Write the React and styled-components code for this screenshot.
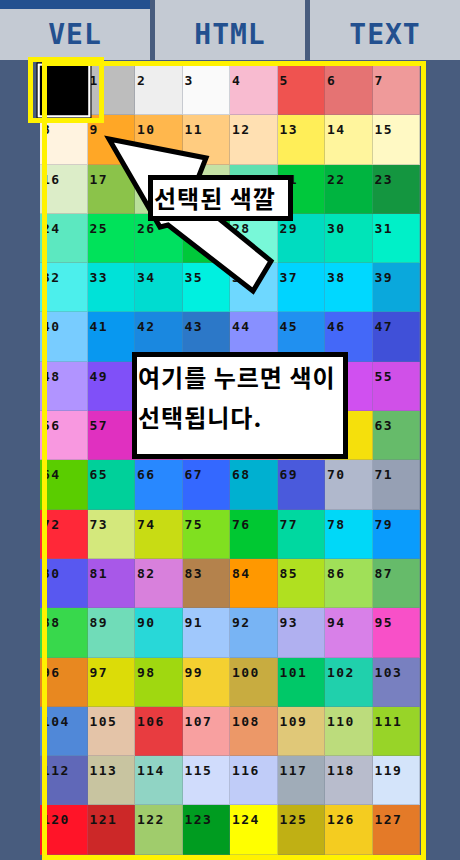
import React from 'react';
import styled, { createGlobalStyle } from 'styled-components';

const GlobalStyle = createGlobalStyle`
  html, body {
    margin: 0;
    padding: 0;
    background: #485c7e;
    overflow: hidden;
  }
  * { box-sizing: border-box; }
`;

const COLORS = [
  '#000000', '#bdbdbd', '#eeeeee', '#fafafa', '#f8bbd0', '#ef5350', '#e57373', '#ef9a9a',
  '#fff3e0', '#ffa726', '#ffb74d', '#ffcc80', '#ffe0b2', '#ffee58', '#fff59d', '#fff9c4',
  '#dcedc8', '#8bc34a', '#b9df9a', '#c5e1a5', '#5fe0b0', '#00c83c', '#00b440', '#149640',
  '#5ce8c0', '#00e25a', '#00e060', '#00c83a', '#78f8d8', '#00dcc0', '#00e4b8', '#00f0c8',
  '#4cefec', '#00e2d8', '#00dcd0', '#00f0e0', '#6ed8ff', '#00d4ff', '#00d8ff', '#0aa8dc',
  '#78ccff', '#0898f0', '#1a88e0', '#2c78c8', '#8890ff', '#2090f0', '#4468f8', '#4050d8',
  '#b194ff', '#8050f8', '#9c5cf0', '#a060e8', '#b058f0', '#c050f0', '#d050f0', '#d050e8',
  '#f898e0', '#e030c0', '#e040b0', '#f060a0', '#ff8080', '#ffb040', '#f5e00c', '#66bb6a',
  '#5acd00', '#00d09a', '#2888ff', '#3468ff', '#00b0d0', '#4a5adc', '#b0b8cc', '#96a0b4',
  '#ff2838', '#d4e87c', '#c8dc14', '#80e020', '#00c832', '#00d8a0', '#00d8f8', '#0a9cfc',
  '#5858f0', '#a858e8', '#d880dc', '#b4824c', '#ff9800', '#b0e020', '#a0e058', '#66bb6a',
  '#38d84c', '#70dcb8', '#28d8d8', '#a0c8fc', '#78b4f4', '#b0b0f0', '#d880e8', '#f850c8',
  '#e88820', '#dcdc08', '#a0d810', '#f4d030', '#c8ac40', '#00c868', '#20d0ac', '#7880c0',
  '#5088d8', '#e4c4a8', '#e83c40', '#f8a0a0', '#ec9868', '#e0c878', '#bcdc7c', '#98d428',
  '#6068b8', '#c8c4a0', '#90d4c4', '#d0dcfc', '#c0ccf8', '#a0acb8', '#b8bccc', '#d4e4fa',
  '#ff1428', '#cc2828', '#a0cc6c', '#009c20', '#ffff00', '#c0b014', '#f4cc20', '#e47a28',
];

const Page = styled.div`
  width: 460px;
  height: 860px;
  overflow: hidden;
  background: #485c7e;
`;

const TabBar = styled.div`
  display: flex;
  gap: 5px;
  height: 60px;
`;

const Tab = styled.div`
  flex: 1;
  display: flex;
  align-items: flex-end;
  justify-content: center;
  padding-bottom: 11px;
  background: #c4cad3;
  box-shadow: ${(p) => (p.$active ? 'inset 0 9px 0 #23508f' : 'none')};
  color: #23508f;
  font-family: 'DejaVu Sans Mono', monospace;
  font-weight: 700;
  font-size: 28px;
  line-height: 28px;
  letter-spacing: 1px;
`;

const Body = styled.div`
  padding: 6px 0 0 40px;
`;

const Board = styled.div`
  position: relative;
  width: 380px;
`;

const Grid = styled.div`
  display: grid;
  grid-template-columns: repeat(8, 1fr);
  grid-auto-rows: 49.3px;
`;

const Cell = styled.div`
  position: relative;
  z-index: ${(p) => (p.$selected ? 2 : 0)};
  background: ${(p) => p.$color};
  border-right: 1px solid rgba(110, 120, 140, 0.3);
  border-bottom: 1px solid rgba(110, 120, 140, 0.3);
  padding: 7px 0 0 2px;
  color: #111;
  font-family: 'DejaVu Sans Mono', monospace;
  font-weight: 700;
  font-size: 13px;
  letter-spacing: 1.4px;
  ${(p) =>
    p.$selected &&
    `
    border: 2px solid #fff;
    box-shadow: 0 0 0 1px #000;
    transform: scale(1.1);
    color: #000;
  `}
`;

const Frame = styled.div`
  position: absolute;
  z-index: 3;
  left: ${(p) => p.$left}px;
  top: ${(p) => p.$top}px;
  width: ${(p) => p.$w}px;
  height: ${(p) => p.$h}px;
  border: 5px solid #fff200;
  pointer-events: none;
`;

const Arrow = styled.svg`
  position: absolute;
  z-index: 4;
  left: 60px;
  top: 64px;
  overflow: visible;
`;

const Callout = styled.div`
  position: absolute;
  z-index: 5;
  left: ${(p) => p.$left}px;
  top: ${(p) => p.$top}px;
  width: ${(p) => p.$w}px;
  height: ${(p) => p.$h}px;
  background: #fff;
  border: 5px solid #000;
  padding: 0 0 0 1px;
  color: #000;
  font-family: 'Noto Sans CJK KR', 'Noto Sans', sans-serif;
  font-weight: 700;
  font-size: 24px;
  letter-spacing: 1px;
  line-height: ${(p) => p.$lh}px;
  white-space: nowrap;
`;

export default function App() {
  return (
    <Page>
      <GlobalStyle />
      <TabBar>
        <Tab $active>VEL</Tab>
        <Tab>HTML</Tab>
        <Tab>TEXT</Tab>
      </TabBar>
      <Body>
        <Board>
          <Grid>
            {COLORS.map((c, i) => (
              <Cell key={i} $color={c} $selected={i === 0}>
                {i}
              </Cell>
            ))}
          </Grid>
          <Frame $left={2} $top={-5} $w={384} $h={799} />
          <Frame $left={-12} $top={-9} $w={76} $h={66} />
          <Arrow width="185" height="170" viewBox="0 0 185 170">
            <polygon
              points="9,9 106,28 91,66 171,131 153,161 68,95 60,97"
              fill="#fff"
              stroke="#000"
              strokeWidth="5"
              strokeLinejoin="miter"
              strokeMiterlimit="3"
            />
          </Arrow>
          <Callout $left={108} $top={109} $w={145} $h={46} $lh={36}>
            선택된 색깔
          </Callout>
          <Callout $left={92} $top={286} $w={216} $h={107} $lh={40}>
            여기를 누르면 색이
            <br />
            선택됩니다.
          </Callout>
        </Board>
      </Body>
    </Page>
  );
}
